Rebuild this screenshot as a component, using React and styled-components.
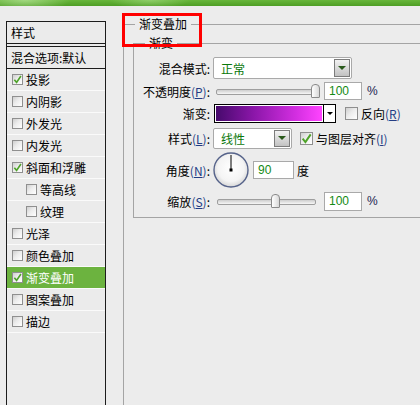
import React from 'react';
import styled, { createGlobalStyle } from 'styled-components';

const GlobalStyle = createGlobalStyle`
  * { box-sizing: border-box; }
  html, body { margin: 0; padding: 0; background: #ececec; }
  body {
    font-family: "Noto Sans CJK SC", "Liberation Sans", sans-serif;
    font-size: 12px;
    color: #000;
  }
`;

const Window = styled.div`
  position: relative;
  width: 420px;
  height: 405px;
  overflow: hidden;
  background: #ececec;
  display: flex;
  flex-direction: column;
`;

const TitleBar = styled.div`
  flex: none;
  height: 6px;
  background:
    radial-gradient(ellipse 45px 12px at 25px 0, rgba(210, 245, 185, 0.55), transparent),
    radial-gradient(ellipse 40px 9px at 150px 0, rgba(190, 235, 160, 0.45), transparent),
    linear-gradient(#68b63b, #4e9e25);
`;

const Body = styled.div`
  flex: 1;
  min-height: 0;
  display: flex;
  align-items: flex-start;
  padding-left: 6px;
`;

/* ---------- left style list ---------- */

const StylePanel = styled.div`
  flex: none;
  width: 100px;
  align-self: stretch;
  margin-top: 15px;
  border: 1px solid #1c1c1c;
  border-bottom: none;
  background: #ebebeb;
  display: flex;
  flex-direction: column;
`;

const PanelHeader = styled.div`
  height: 22px;
  line-height: 21px;
  padding-left: 4px;
  border-bottom: 1px solid #1c1c1c;
  margin-bottom: 2px;
`;

const BlendRow = styled.div`
  height: 23px;
  border-top: 1px solid #1c1c1c;
  border-bottom: 1px solid #1c1c1c;
  padding-left: 4px;
  display: flex;
  align-items: center;
  white-space: nowrap;
`;

const EffectRow = styled.div`
  height: 22px;
  display: flex;
  align-items: center;
  gap: 3px;
  padding-left: ${p => (p.$indent ? 19 : 5)}px;
  border-bottom: 1px solid #fafafa;
  background: ${p => (p.$active ? '#6cb33f' : 'transparent')};
  color: ${p => (p.$active ? '#fff' : '#000')};
  white-space: nowrap;
`;

/* ---------- checkbox ---------- */

const Box = styled.span`
  flex: none;
  position: relative;
  width: ${p => p.$size}px;
  height: ${p => p.$size}px;
  border: 1px solid #8f8f8f;
  background: linear-gradient(135deg, #cfcfcf 0%, #ececec 45%, #ffffff 100%);
  display: flex;
  align-items: center;
  justify-content: center;
`;

const CheckBox = ({ checked, size = 11 }) => (
  <Box $size={size}>
    {checked && (
      <svg width={size - 2} height={size - 2} viewBox="0 0 10 10">
        <path d="M1.5 5.2 L4 8.2 L8.8 1.2" fill="none" stroke="#4ea329" strokeWidth="1.8" />
      </svg>
    )}
  </Box>
);

/* ---------- right group boxes ---------- */

const OuterGroup = styled.fieldset`
  flex: none;
  margin: 11px 0 0 17px;
  padding: 0 0 0 9px;
  width: 330px;
  height: 420px;
  min-width: 0;
  border: 1px solid #a4a4a4;
`;

const GroupTitle = styled.legend`
  margin-left: ${p => p.$ml}px;
  padding: 0 4px;
  line-height: 14px;
  font-size: 12px;
`;

const InnerGroup = styled.fieldset`
  margin: 5px 0 0 0;
  padding: 6px 0 3px 0;
  width: 330px;
  min-width: 0;
  border: 1px solid #a4a4a4;
`;

const Field = styled.div`
  display: flex;
  align-items: center;
  height: ${p => p.$h}px;
  white-space: nowrap;
`;

const FieldLabel = styled.span`
  flex: none;
  width: 76px;
  text-align: right;
`;

const Key = styled.span`
  color: #233d84;
  u { text-underline-offset: 1px; }
`;

const Text = styled.span`
  flex: none;
  margin-left: ${p => p.$ml || 0}px;
`;

const Select = styled.div`
  flex: none;
  margin-left: ${p => p.$ml}px;
  width: ${p => p.$w}px;
  height: ${p => p.$h}px;
  display: flex;
  align-items: center;
  justify-content: space-between;
  padding: 0 1px 0 7px;
  background: #fff;
  border: 1px solid #a9a9a9;
  border-radius: 2px;
  color: #0a780a;
`;

const DropButton = styled.span`
  flex: none;
  width: 16px;
  height: calc(100% - 2px);
  border: 1px solid #7c7c7c;
  background: linear-gradient(#f2f2f2, #c2c2c2);
  display: flex;
  align-items: center;
  justify-content: center;
  &::after {
    content: '';
    border-left: 4px solid transparent;
    border-right: 4px solid transparent;
    border-top: 4px solid #2a5a1c;
  }
`;

const SliderTrack = styled.div`
  flex: none;
  position: relative;
  margin-left: ${p => p.$ml}px;
  width: ${p => p.$w}px;
  height: 14px;
  &::before {
    content: '';
    position: absolute;
    left: 0;
    right: 0;
    top: 5px;
    height: 4px;
    border: 1px solid #9e9e9e;
    border-radius: 2px;
    background: linear-gradient(#cdcdcd, #f6f6f6);
  }
`;

const Thumb = styled.span`
  position: absolute;
  top: 0;
  width: 9px;
  height: 14px;
  border: 1px solid #8a8a8a;
  border-radius: 4px 4px 1px 1px;
  background: linear-gradient(90deg, #ffffff, #d9d9d9);
`;

const Slider = ({ ml, w, value }) => (
  <SliderTrack $ml={ml} $w={w}>
    <Thumb style={{ left: Math.round(((w - 9) * value) / 100) }} />
  </SliderTrack>
);

const NumberBox = styled.div`
  flex: none;
  margin-left: ${p => p.$ml}px;
  width: ${p => p.$w}px;
  height: ${p => p.$h}px;
  padding-left: 4px;
  display: flex;
  align-items: center;
  background: #fff;
  border: 1px solid #a9a9a9;
  color: #148a14;
  font-family: "Liberation Sans", "Noto Sans", sans-serif;
`;

const Unit = styled.span`
  flex: none;
  margin-left: ${p => p.$ml}px;
  font-family: ${p => (p.$latin ? '"Liberation Sans", sans-serif' : 'inherit')};
  color: ${p => (p.$latin ? '#1b2450' : '#000')};
`;

const GradientPicker = styled.div`
  flex: none;
  margin-left: 4px;
  width: 122px;
  height: 19px;
  display: flex;
  border: 1px solid #000;
  background: #fff;
`;

const GradientFill = styled.div`
  flex: 1;
  margin: 1px;
  background: linear-gradient(90deg, #460a6c 0%, #8a16a8 35%, #d22ee0 75%, #ff44ff 100%);
`;

const GradientArrow = styled.div`
  flex: none;
  width: 12px;
  border-left: 1px solid #000;
  display: flex;
  align-items: center;
  justify-content: center;
  &::after {
    content: '';
    border-left: 3px solid transparent;
    border-right: 3px solid transparent;
    border-top: 3px solid #000;
  }
`;

const DialWrap = styled.div`
  flex: none;
  margin-left: 3px;
  width: 36px;
  height: 36px;
`;

const Dial = ({ angle }) => {
  const r = (angle * Math.PI) / 180;
  const x2 = 18 + Math.cos(r) * 15;
  const y2 = 18 - Math.sin(r) * 15;
  return (
    <DialWrap>
      <svg width="36" height="36" viewBox="0 0 36 36">
        <defs>
          <radialGradient id="dialFill" cx="50%" cy="45%" r="55%">
            <stop offset="0%" stopColor="#ffffff" />
            <stop offset="70%" stopColor="#f4f4f4" />
            <stop offset="100%" stopColor="#d6d6d6" />
          </radialGradient>
        </defs>
        <circle cx="18" cy="18" r="17" fill="url(#dialFill)" stroke="#56638a" strokeWidth="1.4" />
        <line x1="18" y1="18" x2={x2} y2={y2} stroke="#000" strokeWidth="1" />
        <rect x="16.5" y="16.5" width="3" height="3" fill="#000" />
      </svg>
    </DialWrap>
  );
};

const Annotation = styled.div`
  position: absolute;
  left: 122px;
  top: 13px;
  width: 80px;
  height: 34px;
  border: 3px solid #ff0000;
  pointer-events: none;
`;

const effects = [
  { label: '投影', checked: true },
  { label: '内阴影' },
  { label: '外发光' },
  { label: '内发光' },
  { label: '斜面和浮雕', checked: true },
  { label: '等高线', indent: true },
  { label: '纹理', indent: true },
  { label: '光泽' },
  { label: '颜色叠加' },
  { label: '渐变叠加', checked: true, active: true },
  { label: '图案叠加' },
  { label: '描边' },
];

const Mn = ({ k }) => (
  <Key>
    (<u>{k}</u>)
  </Key>
);

export default function App() {
  return (
    <>
      <GlobalStyle />
      <Window>
        <TitleBar />
        <Body>
          <StylePanel>
            <PanelHeader>样式</PanelHeader>
            <BlendRow>混合选项:默认</BlendRow>
            {effects.map(e => (
              <EffectRow key={e.label} $indent={e.indent} $active={e.active}>
                <CheckBox checked={e.checked} />
                <span>{e.label}</span>
              </EffectRow>
            ))}
          </StylePanel>

          <OuterGroup>
            <GroupTitle $ml={2}>渐变叠加</GroupTitle>
            <InnerGroup>
              <GroupTitle $ml={11}>渐变</GroupTitle>

              <Field $h={24}>
                <FieldLabel>混合模式:</FieldLabel>
                <Select $ml={3} $w={139} $h={22}>
                  <span>正常</span>
                  <DropButton />
                </Select>
              </Field>

              <Field $h={22}>
                <FieldLabel>
                  不透明度<Mn k="P" />:
                </FieldLabel>
                <Slider ml={6} w={104} value={100} />
                <NumberBox $ml={4} $w={38} $h={18}>100</NumberBox>
                <Unit $ml={5} $latin>%</Unit>
              </Field>

              <Field $h={22}>
                <FieldLabel>渐变:</FieldLabel>
                <GradientPicker>
                  <GradientFill />
                  <GradientArrow />
                </GradientPicker>
                <Text $ml={9}>
                  <CheckBox size={13} />
                </Text>
                <Text $ml={3}>
                  反向<Mn k="R" />
                </Text>
              </Field>

              <Field $h={28}>
                <FieldLabel>
                  样式<Mn k="L" />:
                </FieldLabel>
                <Select $ml={3} $w={79} $h={21}>
                  <span>线性</span>
                  <DropButton />
                </Select>
                <Text $ml={8}>
                  <CheckBox size={13} checked />
                </Text>
                <Text $ml={3}>
                  与图层对齐<Mn k="I" />
                </Text>
              </Field>

              <Field $h={36}>
                <FieldLabel>
                  角度<Mn k="N" />:
                </FieldLabel>
                <Dial angle={90} />
                <NumberBox $ml={4} $w={41} $h={18}>90</NumberBox>
                <Unit $ml={3}>度</Unit>
              </Field>

              <Field $h={26}>
                <FieldLabel>
                  缩放<Mn k="S" />:
                </FieldLabel>
                <Slider ml={7} w={99} value={60} />
                <NumberBox $ml={8} $w={38} $h={19}>100</NumberBox>
                <Unit $ml={5} $latin>%</Unit>
              </Field>
            </InnerGroup>
          </OuterGroup>
        </Body>
        <Annotation />
      </Window>
    </>
  );
}
